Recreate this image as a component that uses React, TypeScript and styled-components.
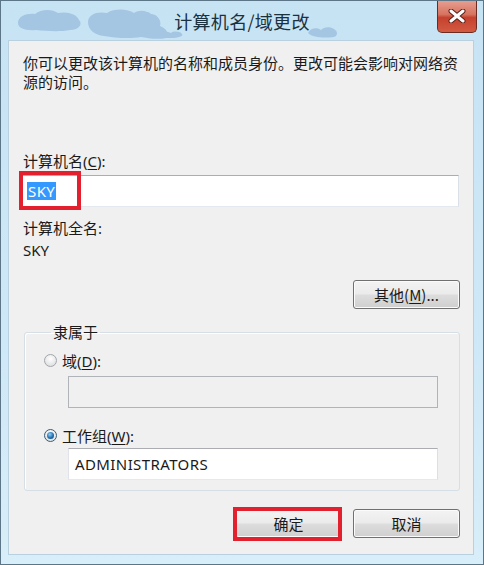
import React from "react";
import styled, { createGlobalStyle } from "styled-components";

const GlobalStyle = createGlobalStyle`
  html, body {
    margin: 0;
    padding: 0;
    background: #ffffff;
  }
  body {
    font-family: "Noto Sans", "Noto Sans CJK SC", sans-serif;
    color: #1a1a1a;
  }
`;

const Window = styled.div`
  position: relative;
  width: 484px;
  height: 565px;
  box-sizing: border-box;
  border: 1px solid #5d7687;
  background: linear-gradient(#c6e3f4, #cfe8f7 60%, #d8eef9);
  padding: 0 9px 9px 7px;
  display: flex;
  flex-direction: column;
  overflow: hidden;
`;

const TitleBar = styled.div`
  position: relative;
  height: 39px;
  display: flex;
  align-items: center;
  justify-content: center;
`;

const Clouds = styled.svg`
  position: absolute;
  left: 0;
  top: 0;
`;

const Title = styled.span`
  position: relative;
  font-family: "Noto Sans CJK SC", sans-serif;
  font-size: 18px;
  color: #1a3140;
  letter-spacing: 0.3px;
  margin-left: 2px;
`;

const CloseButton = styled.div`
  position: absolute;
  top: -1px;
  right: 6px;
  width: 40px;
  height: 33px;
  box-sizing: border-box;
  border: 1px solid #6b2a22;
  border-top: none;
  border-radius: 0 0 5px 5px;
  background: linear-gradient(#e7a194, #d6735f 45%, #c4412d 55%, #d35a42);
  display: flex;
  align-items: center;
  justify-content: center;
`;

const Client = styled.div`
  flex: 1;
  background: #f0f0f0;
  border: 1px solid #b9d0de;
  padding: 0 13px 0 11px;
  display: flex;
  flex-direction: column;
  align-items: flex-start;
`;

const Text = styled.div<{ $top?: number }>`
  margin: ${(p) => p.$top ?? 0}px 0 0 3px;
  font-size: 15px;
  line-height: 19px;
  white-space: nowrap;
`;

const Key = styled.span`
  text-decoration: underline;
  text-underline-offset: 2px;
`;

const TextBox = styled.div<{ $width: number; $top: number; $left?: number; $disabled?: boolean }>`
  position: relative;
  width: ${(p) => p.$width}px;
  height: 32px;
  box-sizing: border-box;
  margin: ${(p) => p.$top}px 0 0 ${(p) => p.$left ?? 0}px;
  border: 1px solid;
  border-color: ${(p) =>
    p.$disabled ? "#b0b4b8" : "#abadb3 #dbdfe6 #e3e9ef #e2e3ea"};
  background: ${(p) => (p.$disabled ? "#f0f0f0" : "#ffffff")};
  padding-left: 6px;
  display: flex;
  align-items: center;
  font-size: 15px;
  letter-spacing: 0.4px;
`;

const Selected = styled.span`
  background: #3399ff;
  color: #ffffff;
  line-height: 18px;
  padding: 0 1px;
`;

const RedMark = styled.div`
  position: absolute;
  left: -2px;
  top: -5px;
  width: 62px;
  height: 39px;
  box-sizing: border-box;
  border: 4px solid #e3202d;
  pointer-events: none;
`;

const Button = styled.button<{ $marked?: boolean }>`
  position: relative;
  width: 107px;
  height: 29px;
  box-sizing: border-box;
  border: 1px solid #707070;
  border-radius: 3px;
  background: linear-gradient(#f3f3f3, #ebebeb 48%, #dddddd 52%, #cfcfcf);
  box-shadow: inset 0 0 0 1px #fbfbfb;
  font-family: "Noto Sans CJK SC", sans-serif;
  font-size: 15px;
  color: #1a1a1a;
  padding: 0;

  &::after {
    content: "";
    display: ${(p) => (p.$marked ? "block" : "none")};
    position: absolute;
    left: -3px;
    top: -3px;
    right: -1px;
    bottom: -4px;
    border: 4px solid #e3202d;
  }
`;

const OtherButton = styled(Button)`
  align-self: flex-end;
  margin-top: 20px;
`;

const Group = styled.fieldset`
  width: 436px;
  box-sizing: border-box;
  margin: 14px 0 0 4px;
  padding: 0 19px 10px;
  border: 1px solid #d5dfe5;
  border-radius: 3px;
  box-shadow: inset 1px 1px 0 #ffffff;
`;

const Legend = styled.legend`
  margin-left: 7px;
  padding: 0 2px;
  font-size: 15px;
  line-height: 19px;
`;

const RadioRow = styled.div<{ $top: number }>`
  display: flex;
  align-items: center;
  gap: 5px;
  margin-top: ${(p) => p.$top}px;
  height: 19px;
  font-size: 15px;
`;

const Radio = styled.span<{ $checked?: boolean }>`
  width: 13px;
  height: 13px;
  box-sizing: border-box;
  border-radius: 50%;
  border: 1px solid ${(p) => (p.$checked ? "#3c5d75" : "#a3a6a8")};
  background: radial-gradient(circle at 50% 35%, #ffffff, #d6d8da);
  display: flex;
  align-items: center;
  justify-content: center;

  &::after {
    content: "";
    display: ${(p) => (p.$checked ? "block" : "none")};
    width: 7px;
    height: 7px;
    border-radius: 50%;
    background: radial-gradient(circle at 40% 35%, #8fd0f5, #1f6fb0 55%, #0d3f6e);
  }
`;

const ButtonRow = styled.div`
  align-self: flex-end;
  display: flex;
  gap: 11px;
  margin-top: 18px;
`;

const App: React.FC = () => {
  return (
    <>
      <GlobalStyle />
      <Window>
        <TitleBar>
          <Clouds width="466" height="39" viewBox="0 0 466 39">
            <g fill="#a5c6e3">
              <path d="M10 22c0-7 9-10 17-9 6-5 17-5 23-1 9-2 19 1 21 7 4 4 0 10-9 10-10 2-24 1-34 0-11 1-18-2-18-7z" />
              <path d="M80 21c0-8 10-11 19-9 8-5 21-4 27 0 6-4 14-2 17 2 6 0 11 5 9 11 6 2 10 8 6 12-8 2-19 0-25-1-10 2-27 1-37-1-9-1-16-6-16-14z" />
              <path d="M128 17c4-7 11-8 15-4 5 0 9 4 9 10 0 6-7 10-13 9-7 0-13-9-11-15z" />
              <path d="M148 34c4-4 11-4 15-2 2-2 9-2 11 1 2 2-4 4-11 4-6 0-15 0-15-3z" />
              <path d="M300 32c2-5 9-6 13-3 2-3 9-4 13-1 4 2 4 7 0 8-9 1-21 1-26-4z" />
            </g>
          </Clouds>
          <Title>计算机名/域更改</Title>
        </TitleBar>
        <CloseButton>
          <svg width="18" height="14" viewBox="0 0 18 14">
            <path d="M3 2l12 10M15 2L3 12" stroke="#5a1f18" strokeWidth="5" strokeLinecap="round" />
            <path d="M3 2l12 10M15 2L3 12" stroke="#ffffff" strokeWidth="3" strokeLinecap="round" />
          </svg>
        </CloseButton>

        <Client>
          <Text $top={13}>
            你可以更改该计算机的名称和成员身份。更改可能会影响对网络资
            <br />
            源的访问。
          </Text>

          <Text $top={60}>
            计算机名(<Key>C</Key>):
          </Text>
          <TextBox $width={439} $top={4}>
            <Selected>SKY</Selected>
            <RedMark />
          </TextBox>

          <Text $top={12}>计算机全名:</Text>
          <Text $top={3}>SKY</Text>

          <OtherButton>
            其他(<Key>M</Key>)...
          </OtherButton>

          <Group>
            <Legend>隶属于</Legend>
            <RadioRow $top={9}>
              <Radio />
              <span>
                域(<Key>D</Key>):
              </span>
            </RadioRow>
            <TextBox $width={370} $top={6} $left={24} $disabled />

            <RadioRow $top={18}>
              <Radio $checked />
              <span>
                工作组(<Key>W</Key>):
              </span>
            </RadioRow>
            <TextBox $width={370} $top={3} $left={24}>
              ADMINISTRATORS
            </TextBox>
          </Group>

          <ButtonRow>
            <Button $marked>确定</Button>
            <Button>取消</Button>
          </ButtonRow>
        </Client>
      </Window>
    </>
  );
};

export default App;
